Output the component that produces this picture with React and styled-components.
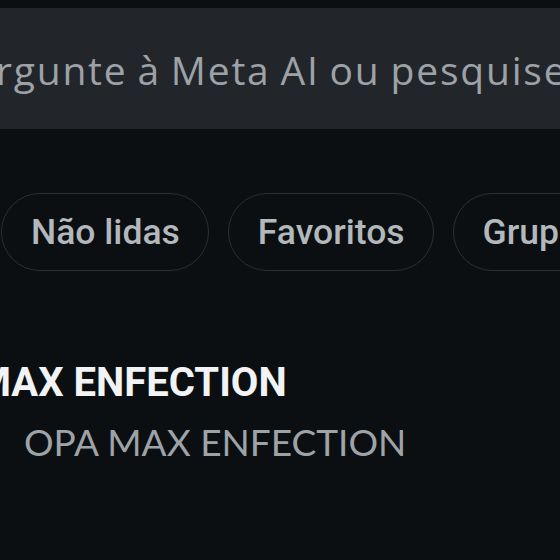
import React from "react";
import styled, { createGlobalStyle } from "styled-components";

const Global = createGlobalStyle`
  html, body { margin: 0; padding: 0; background: #0b0f12; }
  #root { width: 560px; height: 560px; }
`;

const Screen = styled.div`
  width: 560px;
  height: 560px;
  overflow: hidden;
  background: #0b0f12;
  display: flex;
  flex-direction: column;
`;

const SearchBar = styled.div`
  margin-top: 8px;
  margin-left: -60px;
  height: 121px;
  width: 700px;
  background: #22262b;
  display: flex;
  align-items: center;
  flex-shrink: 0;
`;

const SearchText = styled.span`
  font-family: "Open Sans", "Lato", sans-serif;
  font-size: 39px;
  letter-spacing: 1.8px;
  word-spacing: -2px;
  color: #9da2a7;
  white-space: nowrap;
  margin-left: ${(p) => p.$offset}px;
  margin-top: 2px;
`;

const Chips = styled.div`
  display: flex;
  gap: 19px;
  margin-top: 64px;
  margin-left: 1px;
  flex-shrink: 0;
`;

const Chip = styled.div`
  box-sizing: border-box;
  height: 78px;
  padding: 0 28px 0 29px;
  border: 1.5px solid #2b2f33;
  border-radius: 40px;
  display: flex;
  align-items: center;
  font-family: "Roboto", sans-serif;
  font-weight: 500;
  font-size: 35.5px;
  color: #b3b8bd;
  white-space: nowrap;
  flex-shrink: 0;
`;

const ChatItem = styled.div`
  display: flex;
  flex-direction: column;
  margin-top: 88px;
`;

const Title = styled.div`
  font-family: "Roboto", sans-serif;
  font-weight: 700;
  font-size: 40px;
  line-height: 48px;
  color: #f1f3f5;
  white-space: nowrap;
  margin-left: -24px;
`;

const Subtitle = styled.div`
  font-family: "Lato", sans-serif;
  font-size: 37px;
  line-height: 48px;
  color: #9ea3a8;
  white-space: nowrap;
  margin-left: 24px;
  margin-top: 11px;
`;

export default function App() {
  return (
    <>
      <Global />
      <Screen>
        <SearchBar>
          <SearchText $offset={7}>Pergunte à Meta AI ou pesquise</SearchText>
        </SearchBar>
        <Chips>
          <Chip>Não lidas</Chip>
          <Chip>Favoritos</Chip>
          <Chip>Grupos</Chip>
        </Chips>
        <ChatItem>
          <Title>MAX ENFECTION</Title>
          <Subtitle>OPA MAX ENFECTION</Subtitle>
        </ChatItem>
      </Screen>
    </>
  );
}
